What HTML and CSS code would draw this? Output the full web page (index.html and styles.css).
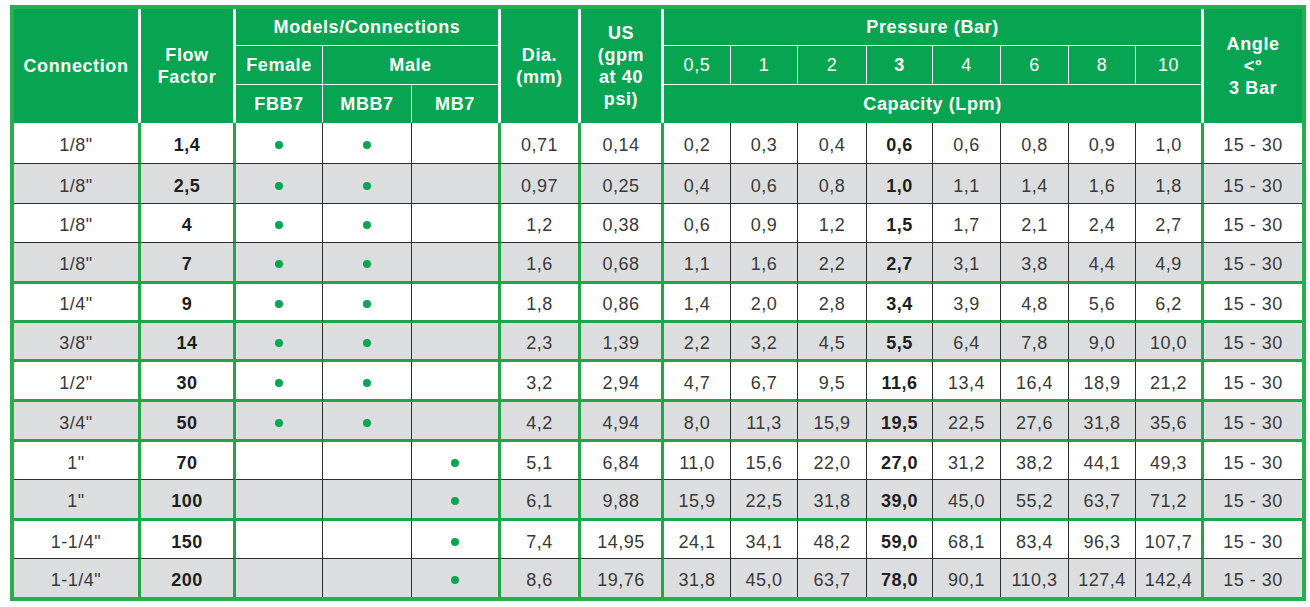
FILE: index.html
```html
<!DOCTYPE html>
<html lang="en">
<head>
<meta charset="utf-8">
<title>Nozzle capacity table</title>
<link rel="stylesheet" href="styles.css">
</head>
<body>
<table class="spec">
  <colgroup>
    <col class="c-conn"><col class="c-flow"><col class="c-fem"><col class="c-mbb"><col class="c-mb">
    <col class="c-dia"><col class="c-us">
    <col class="c-p1"><col class="c-p2"><col class="c-p3"><col class="c-p4"><col class="c-p5"><col class="c-p6"><col class="c-p7"><col class="c-p8">
    <col class="c-ang">
  </colgroup>
  <thead>
    <tr class="hr1">
      <th rowspan="3" class="gs">Connection</th>
      <th rowspan="3" class="gs">Flow<br>Factor</th>
      <th colspan="3" class="gs hb">Models/Connections</th>
      <th rowspan="3" class="gs">Dia.<br>(mm)</th>
      <th rowspan="3" class="gs">US<br>(gpm<br>at 40<br>psi)</th>
      <th colspan="8" class="gs hb">Pressure (Bar)</th>
      <th rowspan="3" class="end">Angle<br>&lt;°<br>3 Bar</th>
    </tr>
    <tr class="hr2">
      <th class="ts hb">Female</th>
      <th colspan="2" class="gs hb">Male</th>
      <th class="ts hb reg">0,5</th>
      <th class="ts hb reg">1</th>
      <th class="ts hb reg">2</th>
      <th class="ts hb">3</th>
      <th class="ts hb reg">4</th>
      <th class="ts hb reg">6</th>
      <th class="ts hb reg">8</th>
      <th class="gs hb reg">10</th>
    </tr>
    <tr class="hr3">
      <th class="ts">FBB7</th>
      <th class="ts">MBB7</th>
      <th class="gs">MB7</th>
      <th colspan="8" class="gs">Capacity (Lpm)</th>
    </tr>
  </thead>
  <tbody>
    <tr class="thin"><td>1/8"</td><td>1,4</td><td><span class="dot"></span></td><td><span class="dot"></span></td><td></td><td>0,71</td><td>0,14</td><td>0,2</td><td>0,3</td><td>0,4</td><td>0,6</td><td>0,6</td><td>0,8</td><td>0,9</td><td>1,0</td><td>15 - 30</td></tr>
    <tr class="thin alt"><td>1/8"</td><td>2,5</td><td><span class="dot"></span></td><td><span class="dot"></span></td><td></td><td>0,97</td><td>0,25</td><td>0,4</td><td>0,6</td><td>0,8</td><td>1,0</td><td>1,1</td><td>1,4</td><td>1,6</td><td>1,8</td><td>15 - 30</td></tr>
    <tr class="thin"><td>1/8"</td><td>4</td><td><span class="dot"></span></td><td><span class="dot"></span></td><td></td><td>1,2</td><td>0,38</td><td>0,6</td><td>0,9</td><td>1,2</td><td>1,5</td><td>1,7</td><td>2,1</td><td>2,4</td><td>2,7</td><td>15 - 30</td></tr>
    <tr class="thick alt"><td>1/8"</td><td>7</td><td><span class="dot"></span></td><td><span class="dot"></span></td><td></td><td>1,6</td><td>0,68</td><td>1,1</td><td>1,6</td><td>2,2</td><td>2,7</td><td>3,1</td><td>3,8</td><td>4,4</td><td>4,9</td><td>15 - 30</td></tr>
    <tr class="thick"><td>1/4"</td><td>9</td><td><span class="dot"></span></td><td><span class="dot"></span></td><td></td><td>1,8</td><td>0,86</td><td>1,4</td><td>2,0</td><td>2,8</td><td>3,4</td><td>3,9</td><td>4,8</td><td>5,6</td><td>6,2</td><td>15 - 30</td></tr>
    <tr class="thick alt"><td>3/8"</td><td>14</td><td><span class="dot"></span></td><td><span class="dot"></span></td><td></td><td>2,3</td><td>1,39</td><td>2,2</td><td>3,2</td><td>4,5</td><td>5,5</td><td>6,4</td><td>7,8</td><td>9,0</td><td>10,0</td><td>15 - 30</td></tr>
    <tr class="thick"><td>1/2"</td><td>30</td><td><span class="dot"></span></td><td><span class="dot"></span></td><td></td><td>3,2</td><td>2,94</td><td>4,7</td><td>6,7</td><td>9,5</td><td>11,6</td><td>13,4</td><td>16,4</td><td>18,9</td><td>21,2</td><td>15 - 30</td></tr>
    <tr class="thick alt"><td>3/4"</td><td>50</td><td><span class="dot"></span></td><td><span class="dot"></span></td><td></td><td>4,2</td><td>4,94</td><td>8,0</td><td>11,3</td><td>15,9</td><td>19,5</td><td>22,5</td><td>27,6</td><td>31,8</td><td>35,6</td><td>15 - 30</td></tr>
    <tr class="thin"><td>1"</td><td>70</td><td></td><td></td><td><span class="dot"></span></td><td>5,1</td><td>6,84</td><td>11,0</td><td>15,6</td><td>22,0</td><td>27,0</td><td>31,2</td><td>38,2</td><td>44,1</td><td>49,3</td><td>15 - 30</td></tr>
    <tr class="thick alt"><td>1"</td><td>100</td><td></td><td></td><td><span class="dot"></span></td><td>6,1</td><td>9,88</td><td>15,9</td><td>22,5</td><td>31,8</td><td>39,0</td><td>45,0</td><td>55,2</td><td>63,7</td><td>71,2</td><td>15 - 30</td></tr>
    <tr class="thin"><td>1-1/4"</td><td>150</td><td></td><td></td><td><span class="dot"></span></td><td>7,4</td><td>14,95</td><td>24,1</td><td>34,1</td><td>48,2</td><td>59,0</td><td>68,1</td><td>83,4</td><td>96,3</td><td>107,7</td><td>15 - 30</td></tr>
    <tr class="last alt"><td>1-1/4"</td><td>200</td><td></td><td></td><td><span class="dot"></span></td><td>8,6</td><td>19,76</td><td>31,8</td><td>45,0</td><td>63,7</td><td>78,0</td><td>90,1</td><td>110,3</td><td>127,4</td><td>142,4</td><td>15 - 30</td></tr>
  </tbody>
</table>
</body>
</html>
```

FILE: styles.css
```css
html, body {
  margin: 0;
  padding: 0;
  background: #ffffff;
}

body {
  font-family: "Liberation Sans", Arial, sans-serif;
  padding: 5px 0 0 10px;
}

.spec {
  box-sizing: border-box;
  width: 1296px;
  table-layout: fixed;
  border-collapse: separate;
  border-spacing: 0;
  border: 4px solid #2aad4e;
}

.c-conn { width: 127px; }
.c-flow { width: 95px; }
.c-fem { width: 87px; }
.c-mbb { width: 89px; }
.c-mb { width: 89px; }
.c-dia { width: 80px; }
.c-us { width: 83px; }
.c-p1 { width: 67px; }
.c-p2 { width: 67px; }
.c-p3 { width: 69px; }
.c-p4 { width: 66px; }
.c-p5 { width: 68px; }
.c-p6 { width: 68px; }
.c-p7 { width: 67px; }
.c-p8 { width: 68px; }
.c-ang { width: 98px; }

.spec th,
.spec td {
  box-sizing: border-box;
  padding: 0;
  text-align: center;
  vertical-align: middle;
  white-space: nowrap;
}

/* header */
.spec th {
  background: #07a551;
  color: #ffffff;
  font-size: 18px;
  font-weight: bold;
  line-height: 22px;
  letter-spacing: 0.6px;
}

.spec th.reg { font-weight: normal; }
.spec th.gs { border-right: 3px solid #ffffff; }
.spec th.ts { border-right: 1px solid #ffffff; }
.spec th.hb { border-bottom: 1px solid #ffffff; }

.hr1 { height: 37px; }
.hr2 { height: 39px; }
.hr3 { height: 38px; }

/* body */
.spec tbody tr { background: #ffffff; }
.spec tbody tr.alt { background: #dcdddf; }

.spec tbody tr:nth-child(1) { height: 41px; }
.spec tbody tr:nth-child(2) { height: 40px; }
.spec tbody tr:nth-child(3) { height: 39px; }
.spec tbody tr:nth-child(4) { height: 41px; }
.spec tbody tr:nth-child(5) { height: 39px; }
.spec tbody tr:nth-child(6) { height: 39px; }
.spec tbody tr:nth-child(7) { height: 40px; }
.spec tbody tr:nth-child(8) { height: 40px; }
.spec tbody tr:nth-child(9) { height: 38px; }
.spec tbody tr:nth-child(10) { height: 41px; }
.spec tbody tr:nth-child(11) { height: 38px; }
.spec tbody tr:nth-child(12) { height: 38px; }

.spec td {
  color: #3a3a3a;
  font-size: 18px;
  line-height: 20px;
  letter-spacing: 0.5px;
  padding-top: 4px;
  border-right: 1px solid #2e2e2e;
}

.spec td:nth-child(1),
.spec td:nth-child(2),
.spec td:nth-child(5),
.spec td:nth-child(6),
.spec td:nth-child(7),
.spec td:nth-child(15) {
  border-right: 3px solid #1fa64b;
}

.spec td:last-child { border-right: 0; }

.spec td:nth-child(2),
.spec td:nth-child(11) {
  font-weight: bold;
  color: #1e1e1e;
}

.spec tr.thin td { border-bottom: 1px solid #2e2e2e; }
.spec tr.thick td { border-bottom: 3px solid #1fa64b; }

.dot {
  display: inline-block;
  width: 8px;
  height: 8px;
  margin-top: -2px;
  border-radius: 50%;
  background: #0aa552;
  vertical-align: middle;
}
```
